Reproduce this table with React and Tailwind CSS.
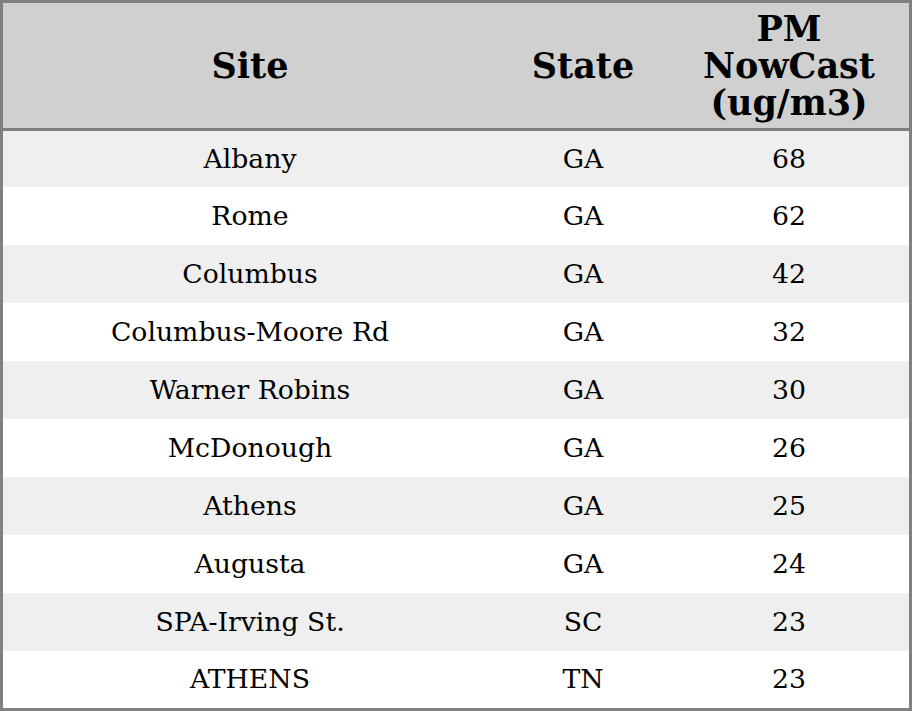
const rows = [
  { site: "Albany", state: "GA", pm: 68 },
  { site: "Rome", state: "GA", pm: 62 },
  { site: "Columbus", state: "GA", pm: 42 },
  { site: "Columbus-Moore Rd", state: "GA", pm: 32 },
  { site: "Warner Robins", state: "GA", pm: 30 },
  { site: "McDonough", state: "GA", pm: 26 },
  { site: "Athens", state: "GA", pm: 25 },
  { site: "Augusta", state: "GA", pm: 24 },
  { site: "SPA-Irving St.", state: "SC", pm: 23 },
  { site: "ATHENS", state: "TN", pm: 23 },
];

export default function App() {
  return (
    <div className="w-[912px] h-[711px] bg-white font-['DejaVu_Serif',serif] text-black overflow-hidden">
      <div className="border-[3px] border-[#808080] h-full flex flex-col">
        <div className="grid grid-cols-[494px_172px_1fr] h-[128px] shrink-0 bg-[#d0d0d0] border-b-[3px] border-[#808080] text-[35px] font-bold leading-[37px] text-center">
          <div className="flex items-center justify-center">Site</div>
          <div className="flex items-center justify-center">State</div>
          <div className="flex items-center justify-center">
            PM
            <br />
            NowCast
            <br />
            (ug/m3)
          </div>
        </div>
        {rows.map((r, i) => (
          <div
            key={i}
            className={`grid grid-cols-[494px_172px_1fr] items-center text-center text-[26.7px] ${
              i === 0 ? "h-[56px] shrink-0" : i === rows.length - 1 ? "flex-1" : "h-[58px] shrink-0"
            } ${i % 2 === 0 ? "bg-[#efefef]" : "bg-white"}`}
          >
            <div>{r.site}</div>
            <div>{r.state}</div>
            <div>{r.pm}</div>
          </div>
        ))}
      </div>
    </div>
  );
}
